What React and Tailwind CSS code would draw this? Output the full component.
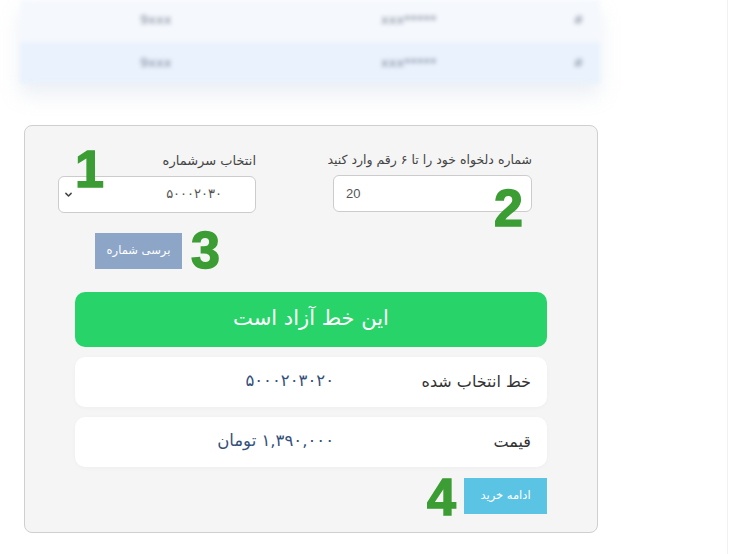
import React from 'react';

const FA = { fontFamily: "'DejaVu Sans', 'Liberation Sans', sans-serif" };

const BlurRow = ({ bg, mark }) => (
    <div className={`flex items-center h-[40px] ${bg} text-[13px] text-[#7f8898]`}>
        <div className="w-[120px]" />
        <div className="w-[241px]">9xxx</div>
        <div className="w-[192px]">xxx*****</div>
        <div className="w-[27px] text-[#8f98a8]">{mark}</div>
    </div>
);

const Mark = ({ n, className }) => (
    <span
        className={`absolute text-[52px] leading-none font-bold text-[#3b9d33] [-webkit-text-stroke:1.5px_#3b9d33] ${className}`}
        style={{ fontFamily: "'Liberation Sans', Arial, sans-serif" }}
    >
        {n}
    </span>
);

const InfoRow = ({ label, value }) => (
    <div className="flex items-center bg-white rounded-[10px] h-[50px] pr-4 shadow-[0_1px_4px_rgba(0,0,0,0.03)]">
        <div className="w-[197px] text-[16px] text-[#333]">{label}</div>
        <div className="text-[16.5px] text-[#34507a]">{value}</div>
    </div>
);

const App = () => {
    return (
        <main className="relative flex min-h-[554px] bg-white overflow-hidden" style={FA}>
            <div className="w-[727px]">
                {/* blurred table above */}
                <div className="ml-5 w-[580px] blur-[2px] shadow-[0_12px_18px_rgba(180,195,215,0.25)]">
                    <BlurRow bg="bg-[#f5f8fd]" mark="#" />
                    <div className="h-[3px] bg-[#f3f7fc]" />
                    <BlurRow bg="bg-[#e9f2fd]" mark="#" />
                </div>

                <section dir="rtl" className="mt-[42px] ml-6 w-[574px] h-[408px] border border-[#cfcfcf] rounded-lg bg-[#f5f5f5] pt-[25px]">
                    <div className="flex pr-[65px] gap-[77px]">
                        <div className="w-[199px]">
                            <label className="block whitespace-nowrap text-[12.5px] text-[#444] mb-[5px]">شماره دلخواه خود را تا ۶ رقم وارد کنید</label>
                            <div dir="ltr" className="h-[37px] bg-white border border-[#ccc] rounded-md flex items-center px-3 text-[13px] text-[#555]" style={{ fontFamily: "'Liberation Sans', sans-serif" }}>
                                20
                            </div>
                        </div>
                        <div className="w-[198px]">
                            <label className="block whitespace-nowrap text-[13px] text-[#444] mb-[5px]">انتخاب سرشماره</label>
                            <div className="h-[37px] bg-white border border-[#ccc] rounded-md flex items-center pr-[33px] pl-[5px] text-[13px] text-[#555]">
                                <span>۵۰۰۰۲۰۳۰</span>
                                <svg className="mr-auto" width="9" height="9" viewBox="0 0 24 24" fill="none" stroke="#444" strokeWidth="4" strokeLinecap="round" strokeLinejoin="round">
                                    <path d="M5 9l7 7 7-7" />
                                </svg>
                            </div>
                        </div>
                    </div>

                    <div className="flex pr-[415px] mt-[20px]">
                        <button className="w-[87px] h-[36px] bg-[#8da6c8] text-white text-[11.5px]">برسی شماره</button>
                    </div>

                    <div className="px-[50px] mt-[23px] flex flex-col gap-[10px]">
                        <div className="h-[55px] rounded-[10px] bg-[#28d46a] text-white text-[21px] flex items-center justify-center">
                            این خط آزاد است
                        </div>
                        <InfoRow label="خط انتخاب شده" value="۵۰۰۰۲۰۳۰۲۰" />
                        <InfoRow label="قیمت" value="۱,۳۹۰,۰۰۰ تومان" />
                        <div className="flex mt-[1px]">
                            <button className="w-[83px] h-[36px] bg-[#5bc3e4] text-white text-[11.5px]">ادامه خرید</button>
                        </div>
                    </div>
                </section>
            </div>
            <div className="flex-1 border-l border-[#f1f1f1]" />

            <Mark n="1" className="left-[75px] top-[143px]" />
            <Mark n="2" className="left-[494px] top-[182px]" />
            <Mark n="3" className="left-[191px] top-[224px]" />
            <Mark n="4" className="left-[427px] top-[471px]" />
        </main>
    );
};

export default App;
